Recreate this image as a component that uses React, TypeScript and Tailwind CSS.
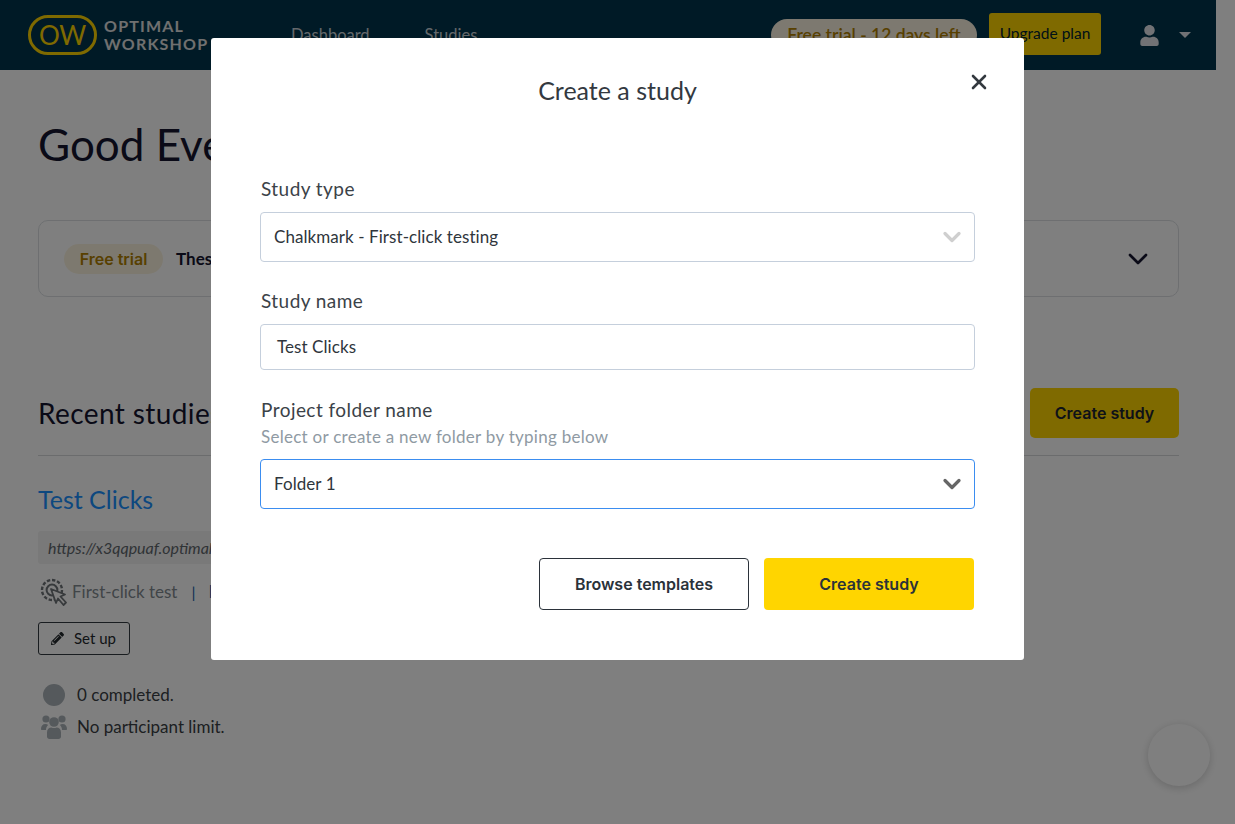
import { ChevronDown, X } from "lucide-react";
import { FaPencilAlt, FaUser } from "react-icons/fa";

const sans = "font-['Lato','Open_Sans',sans-serif]";
const round = "font-['Inter','Lato',sans-serif]";

function ClickIcon() {
  return (
    <svg width="28" height="28" viewBox="0 0 28 28" fill="none" className="shrink-0">
      <circle cx="12" cy="12" r="10" stroke="#6f7478" strokeWidth="2.4" strokeDasharray="3.4 1.8" />
      <circle cx="12" cy="12" r="5.4" stroke="#6f7478" strokeWidth="2" />
      <path d="M11 11 L25 16.5 L20.5 18.5 L26 24.5 L23.5 27 L18 20.5 L16 25 Z" fill="#ffffff" stroke="#6f7478" strokeWidth="1.8" strokeLinejoin="round" />
    </svg>
  );
}

function UsersIcon() {
  return (
    <svg width="26" height="25" viewBox="0 0 26 25" fill="#aab2b8" className="ml-[3px] shrink-0">
      <circle cx="5" cy="5" r="3.6" />
      <circle cx="21" cy="5" r="3.6" />
      <circle cx="13" cy="8" r="4.8" />
      <path d="M0 15c0-3 1.6-5 4.5-5 1.1 0 2 .3 2.6 1-1.4 1.2-2.1 3-2.1 5H1c-.6 0-1-.4-1-1z" />
      <path d="M26 15c0-3-1.6-5-4.5-5-1.1 0-2 .3-2.6 1 1.4 1.2 2.1 3 2.1 5h4c.6 0 1-.4 1-1z" />
      <path d="M6 18.5c0-3.2 2-5 4.5-5 1.5.8 3.500.8 5 0 2.500 0 4.500 1.800 4.500 5v4c0 1.400-1 2.500-2.500 2.500h-9C7 25 6 23.900 6 22.500z" />
    </svg>
  );
}

function Header() {
  return (
    <header className="h-[70px] bg-[#00344c] flex items-center pl-[28px] pr-[25px]">
      <div className="flex items-center w-[263px] gap-[7px] mt-[-1px]">
        <div className="w-[69px] h-[40px] rounded-full border-[3px] border-[#ffd500] flex items-center justify-center text-[#ffd500] text-[26px] leading-none tracking-[-0.3px]">
          OW
        </div>
        <div className="text-[#e0e0e0] text-[16px] leading-[18px] font-bold tracking-[1.2px]">
          <div>OPTIMAL</div>
          <div>WORKSHOP</div>
        </div>
      </div>
      <nav className="flex gap-[55px] text-[16.5px] text-[#c8d0d6] flex-1">
        <span>Dashboard</span>
        <span>Studies</span>
      </nav>
      <span className="h-[32px] w-[206px] flex items-center justify-center rounded-full bg-[#fbf2e0] text-[#b08000] text-[17.500px] font-semibold">
        Free trial - 12 days left
      </span>
      <button className="ml-[12px] mb-[2px] w-[112px] h-[42px] rounded-[3px] bg-[#ffd500] text-[#00222e] text-[15.500px]">
        Upgrade plan
      </button>
      <FaUser className="ml-[38px] text-[#e2e5ea]" size={21} />
      <span className="ml-[19px] w-0 h-0 border-l-[6px] border-r-[6px] border-t-[6px] border-l-transparent border-r-transparent border-t-[#e2e5ea]" />
    </header>
  );
}

function Dashboard() {
  return (
    <main className="pl-[38px] pr-[37px]">
      <h1 className="mt-[48px] text-[44px] leading-[52px] text-[#14142e]">Good Evening</h1>
      <section className="mt-[50px] h-[77px] rounded-[10px] border border-[#dcdfe3] flex items-center pl-[25px] pr-[24px]">
        <span className={`${round} w-[99px] h-[30px] rounded-full bg-[#fbf3df] text-[#b08000] text-[16px] font-semibold flex items-center justify-center`}>
          Free trial
        </span>
        <span className="ml-[13px] flex-1 font-bold text-[17px] text-[#14142e]">These</span>
        <ChevronDown size={32} strokeWidth={2} className="text-[#14142e]" />
      </section>
      <div className="mt-[91px] flex items-center justify-between pb-[17px] border-b border-[#d6d8db] h-[68px]">
        <h2 className="text-[28px] tracking-[0.4px] text-[#14142e]">Recent studies</h2>
        <button className={`${round} w-[149px] h-[50px] rounded-[5px] bg-[#ffd500] text-[#1c2430] text-[16px] font-semibold`}>
          Create study
        </button>
      </div>
      <a className="block mt-[28px] text-[25px] leading-[30px] text-[#1a90ff]">Test Clicks</a>
      <div className="mt-[17px] h-[33px] w-[400px] rounded-[3px] bg-[#f2f2f2] flex items-center pl-[10px] text-[16px] italic text-[#5f666c]">
        https://x3qqpuaf.optimalworkshop.com
      </div>
      <div className="mt-[13px] flex items-center text-[17px] text-[#828a90] h-[30px]">
        <span className="ml-[2px]"><ClickIcon /></span>
        <span className="ml-[4px]">First-click test</span>
        <span className="ml-[14px] text-[#1a5fa8] text-[16px]">|</span>
        <span className="ml-[13px] text-[#1a5fa8]">Draft</span>
      </div>
      <button className="mt-[15px] w-[92px] h-[33px] rounded-[3px] border border-[#333a40] flex items-center pl-[12px] gap-[10px] text-[15px] text-[#22282c]">
        <FaPencilAlt size={13} />
        Set up
      </button>
      <div className="mt-[29px] flex items-center h-[22px] text-[17px] text-[#3a3f44]">
        <span className="ml-[5px] w-[22px] h-[22px] rounded-full bg-[#aab2b8]" />
        <span className="ml-[12px]">0 completed.</span>
      </div>
      <div className="mt-[8px] flex items-center h-[25px] text-[17px] text-[#3a3f44]">
        <UsersIcon />
        <span className="ml-[10px]">No participant limit.</span>
      </div>
    </main>
  );
}

function Field({ children, active, muted, height }: { children: React.ReactNode; active?: boolean; muted?: boolean; height: string }) {
  return (
    <div className={`${height} rounded-[4px] bg-white border-[1.5px] ${active ? "border-[#3b8df0]" : "border-[#c5cfdc]"} flex items-center justify-between pl-[13px] pr-[8px] text-[17px] tracking-[0.07px] text-[#2f363c]`}>
      <span>{children}</span>
      {muted !== undefined && (
        <ChevronDown size={28} strokeWidth={2.8} className={muted ? "text-[#cfcfcf]" : "text-[#666666]"} />
      )}
    </div>
  );
}

function CreateStudyModal() {
  const labelCls = "block ml-[1px] text-[19px] tracking-[0.45px] leading-[24px] text-[#3b4248]";
  return (
    <div className="fixed inset-0 bg-black/50 flex justify-center items-start pt-[38px]">
      <div className="relative w-[813px] h-[622px] bg-white rounded-[3px] px-[49px]">
        <h3 className="pt-[35px] text-center text-[25px] leading-[34px] text-[#33393f]">Create a study</h3>
        <button className="absolute top-[32px] right-[33px] text-[#33393f]">
          <X size={24} strokeWidth={2.6} />
        </button>
        <label className={`${labelCls} mt-[70px]`}>Study type</label>
        <div className="mt-[11px]">
          <Field height="h-[50px]" muted>Chalkmark - First-click testing</Field>
        </div>
        <label className={`${labelCls} mt-[27px]`}>Study name</label>
        <div className="mt-[11px]">
          <Field height="h-[46px]"><span className="ml-[3px]">Test Clicks</span></Field>
        </div>
        <label className={`${labelCls} mt-[28px]`}>Project folder name</label>
        <p className="ml-[1px] mt-[3px] text-[17px] tracking-[0.27px] leading-[24px] text-[#8f9aa3]">Select or create a new folder by typing below</p>
        <div className="mt-[10px]">
          <Field height="h-[50px]" active muted={false}>Folder 1</Field>
        </div>
        <div className={`${round} mt-[49px] flex justify-end gap-[15px] text-[16px] font-semibold text-[#2b323a] pr-[1px]`}>
          <button className="w-[210px] h-[52px] rounded-[4px] border border-[#2b323a] bg-white">Browse templates</button>
          <button className="w-[210px] h-[52px] rounded-[4px] bg-[#ffd500]">Create study</button>
        </div>
      </div>
    </div>
  );
}

export default function App() {
  return (
    <div className={`${sans} relative min-h-[824px] w-[1216px] bg-white`}>
      <Header />
      <Dashboard />
      <div className="fixed left-[1148px] top-[724px] w-[62px] h-[62px] rounded-full bg-white shadow-[0_2px_8px_rgba(0,0,0,0.18)]" />
      <CreateStudyModal />
    </div>
  );
}
